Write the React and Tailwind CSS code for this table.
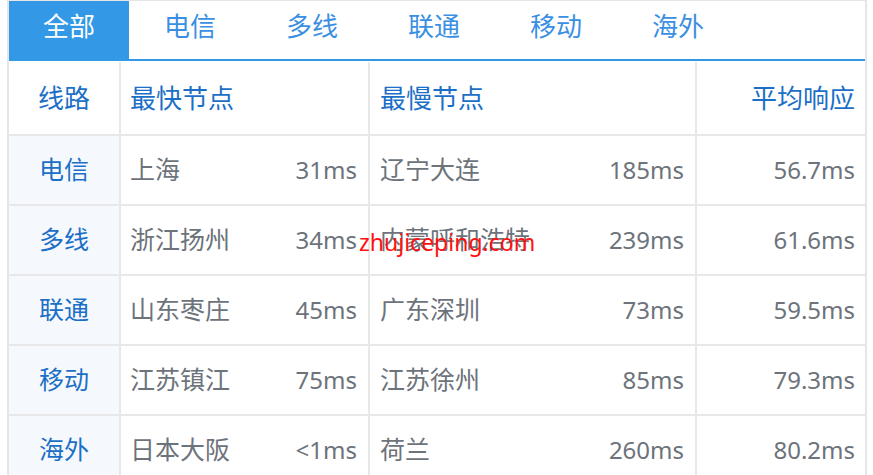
const tabs = ['全部', '电信', '多线', '联通', '移动', '海外'];

const rows = [
    { line: '电信', fast: '上海', fastMs: '31ms', slow: '辽宁大连', slowMs: '185ms', avg: '56.7ms' },
    { line: '多线', fast: '浙江扬州', fastMs: '34ms', slow: '内蒙呼和浩特', slowMs: '239ms', avg: '61.6ms' },
    { line: '联通', fast: '山东枣庄', fastMs: '45ms', slow: '广东深圳', slowMs: '73ms', avg: '59.5ms' },
    { line: '移动', fast: '江苏镇江', fastMs: '75ms', slow: '江苏徐州', slowMs: '85ms', avg: '79.3ms' },
    { line: '海外', fast: '日本大阪', fastMs: '<1ms', slow: '荷兰', slowMs: '260ms', avg: '80.2ms' },
];

const font = { fontFamily: '"Noto Sans", "Noto Sans CJK SC", sans-serif' };

const App = () => {
    return (
        <div className="relative h-[475px] w-[873px] overflow-hidden bg-white" style={font}>
            <div className="ml-[7px] w-[860px] border-x-2 border-t border-[#e6e6e6]">
                {/* tabs */}
                <div className="flex h-[60px] border-b-2 border-[#3399e6]">
                    {tabs.map((t, i) => (
                        <div
                            key={t}
                            className={
                                i === 0
                                    ? 'flex w-[120px] items-center justify-center pb-[7px] bg-[#3399e6] text-[26px] text-white'
                                    : 'flex w-[122px] items-center justify-center pb-[7px] text-[26px] text-[#3b8fe3]'
                            }
                        >
                            {t}
                        </div>
                    ))}
                </div>

                {/* table */}
                <div className="mt-px grid grid-cols-[110px_247px_325px_168px] gap-[2px] bg-[#e8e8e8]">
                    <div className="flex h-[72px] items-center justify-center bg-white text-[26px] text-[#1c6fc6]">线路</div>
                    <div className="flex h-[72px] items-center bg-white pl-[9px] text-[26px] text-[#1c6fc6]">最快节点</div>
                    <div className="flex h-[72px] items-center bg-white pl-[10px] text-[26px] text-[#1c6fc6]">最慢节点</div>
                    <div className="flex h-[72px] items-center justify-end bg-white pr-[10px] text-[26px] text-[#1c6fc6]">平均响应</div>

                    {rows.map(r => (
                        <div key={r.line} className="contents">
                            <div className="flex h-[68px] items-center justify-center bg-[#f5f9fd] text-[25px] text-[#1c6fc6]">{r.line}</div>
                            <div className="flex h-[68px] items-center justify-between bg-white pl-[9px] pr-[11px] text-[#6d737b]">
                                <span className="text-[25px]">{r.fast}</span>
                                <span className="text-[24px]">{r.fastMs}</span>
                            </div>
                            <div className="flex h-[68px] items-center justify-between bg-white pl-[10px] pr-[11px] text-[#6d737b]">
                                <span className="text-[25px]">{r.slow}</span>
                                <span className="text-[24px]">{r.slowMs}</span>
                            </div>
                            <div className="flex h-[68px] items-center justify-end bg-white pr-[10px] text-[24px] text-[#6d737b]">{r.avg}</div>
                        </div>
                    ))}
                </div>
            </div>

            {/* watermark */}
            <div className="absolute left-[359px] top-[231px] text-[23px] leading-none text-[#ff1111]">zhujiceping.com</div>
        </div>
    );
};

export default App;
